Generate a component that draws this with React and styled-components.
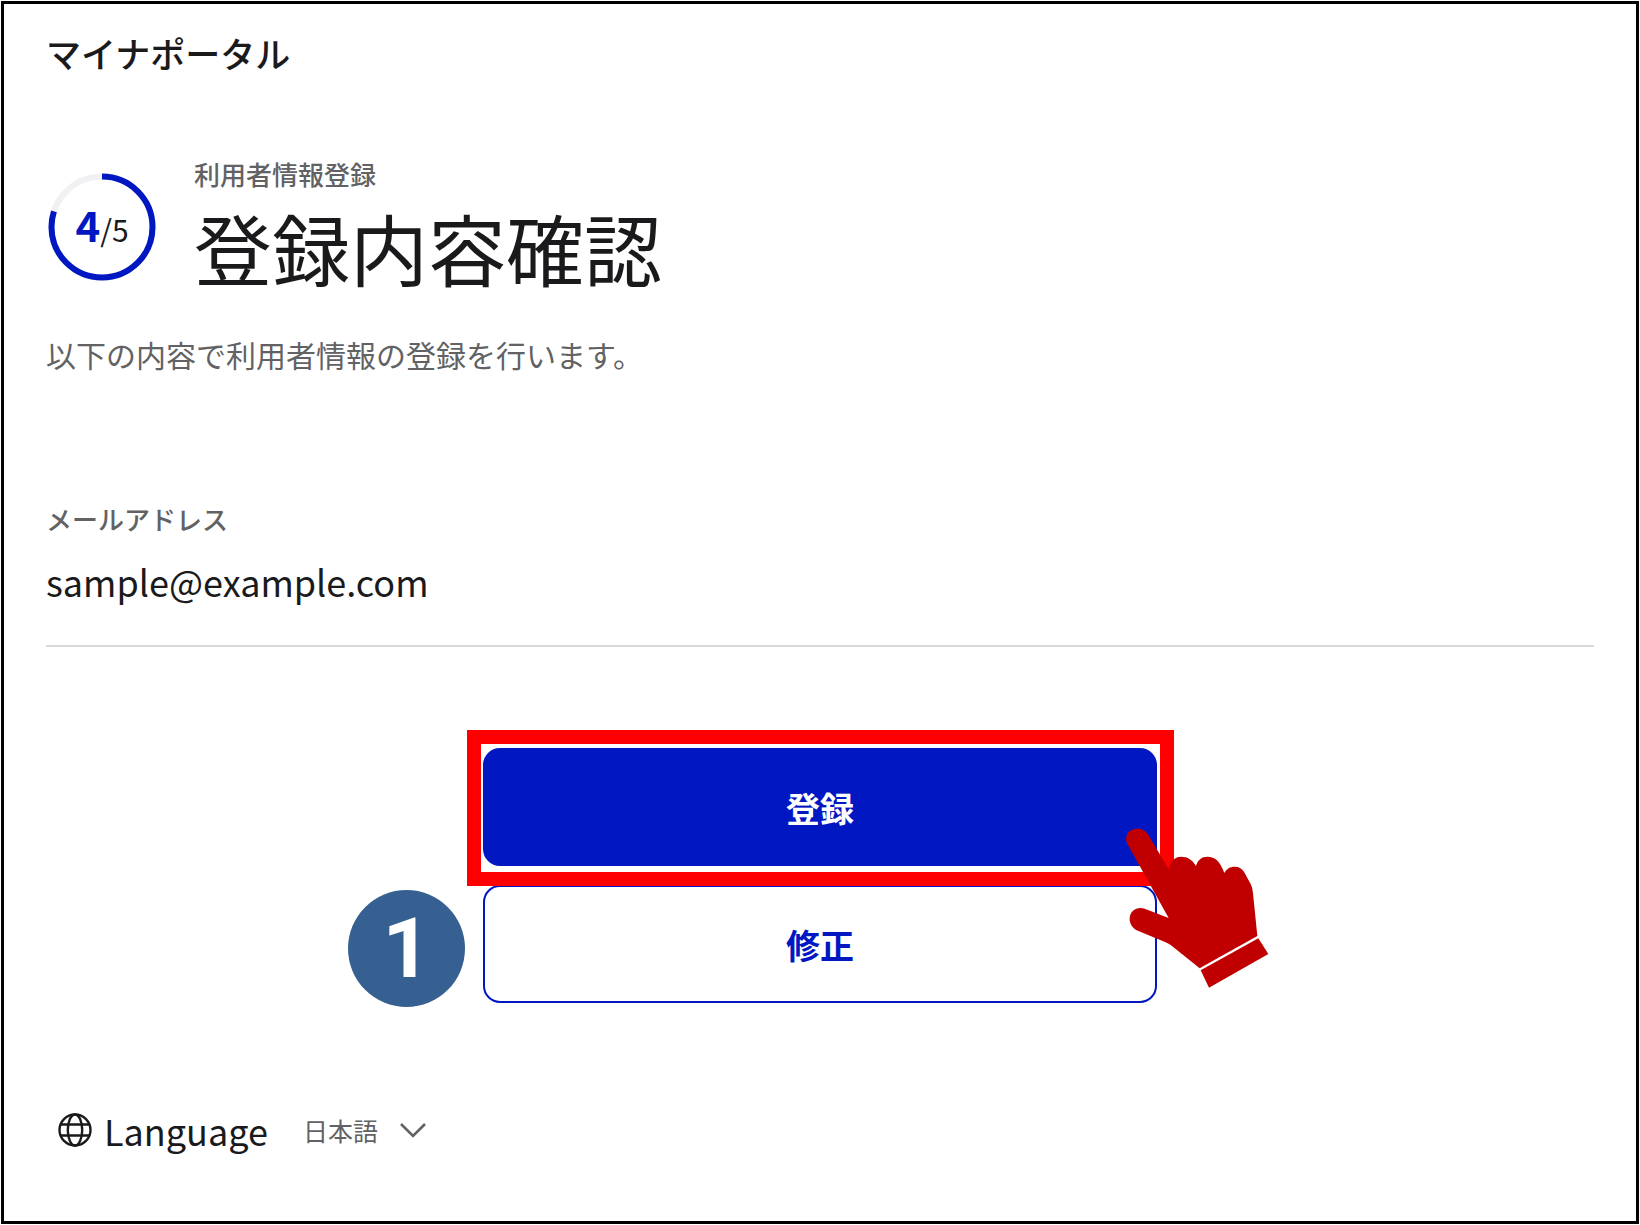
import React from 'react';
import styled, { createGlobalStyle } from 'styled-components';

const blue = '#0017c1';
const ink = '#1a1a1c';
const gray = '#626264';
const font = '"Noto Sans CJK JP", "Noto Sans", sans-serif';

const App = () => {
  return (
    <>
      <GlobalStyle />
      <Page>
        <Logo>マイナポータル</Logo>

        <main>
          <Heading>
            <Step>
              <svg viewBox="0 0 108 108" aria-hidden="true">
                <circle cx="54" cy="54" r="50.5" stroke="#f1f1f4" />
                <circle
                  cx="54"
                  cy="54"
                  r="50.5"
                  stroke={blue}
                  pathLength="100"
                  strokeDasharray="80 20"
                  transform="rotate(-90 54 54)"
                />
              </svg>
              <StepText><b>4</b>/5</StepText>
            </Step>
            <Titles>
              <Category>利用者情報登録</Category>
              <Title>登録内容確認</Title>
            </Titles>
          </Heading>

          <Description>以下の内容で利用者情報の登録を行います。</Description>

          <Details>
            <dt>メールアドレス</dt>
            <dd>sample@example.com</dd>
          </Details>

          <Actions>
            <Highlighted>
              <ActionButton type="button" $primary>登録</ActionButton>
            </Highlighted>
            <ActionButton type="button">修正</ActionButton>
            <Badge>1</Badge>
            <Hand viewBox="75 321 435 486" aria-hidden="true">
              <path d="M113 326C128 326 138 333 144 343L206 448C210 424 225 410 243 410C263 410 278 420 288 438C293 420 305 410 322 410C346 410 360 424 373 459C380 446 390 440 404 440C417 440 425 445 431 454L452 492Q458 503 459 520L472 648L299 745L213 676Q205 670 195 666L110 631C96 622 89 611 89 597C89 577 103 564 122 564Q132 564 142 569L206 594L84 375C78 365 77 355 80 347C84 333 97 326 113 326Z" />
              <path d="M302 751L475 655L505 702L327 803Z" />
            </Hand>
          </Actions>
        </main>

        <Footer>
          <LanguageLabel htmlFor="language">
            <svg viewBox="0 0 34 34" aria-hidden="true">
              <circle cx="17" cy="17" r="15.5" />
              <ellipse cx="17" cy="17" rx="7.2" ry="15.5" />
              <path d="M2.5 11.5H31.5M2.5 22.5H31.5" />
            </svg>
            Language
          </LanguageLabel>
          <SelectBox>
            <select id="language" defaultValue="ja">
              <option value="ja">日本語</option>
            </select>
            <svg viewBox="0 0 28 16" aria-hidden="true">
              <path d="M2 2L14 14L26 2" />
            </svg>
          </SelectBox>
        </Footer>
      </Page>
    </>
  )
}

const GlobalStyle = createGlobalStyle`
  * {
    box-sizing: border-box;
  }

  body {
    margin: 0;
    background: #fff;
    color: ${ink};
    font-family: ${font};
  }
`;

const Page = styled.div`
  min-height: calc(100vh - 2px);
  margin: 1px;
  padding: 24px 42px 32px;
  border: 3px solid #000;
`;

const Logo = styled.header`
  margin-bottom: 78px;
  font-size: 35px;
  font-weight: 500;
  line-height: 50px;
`;

const Heading = styled.div`
  display: flex;
  align-items: center;
  gap: 38px;
  padding-left: 2px;
`;

const Step = styled.div`
  display: grid;
  flex: none;
  width: 108px;
  height: 108px;
  place-items: center;

  > * {
    grid-area: 1 / 1;
  }

  svg {
    width: 100%;
    fill: none;
    stroke-width: 6;
  }
`;

const StepText = styled.span`
  font-size: 30px;
  line-height: 56px;

  b {
    color: ${blue};
    font-size: 42px;
  }
`;

const Titles = styled.div`
  display: flex;
  flex-direction: column;
  gap: 5px;
`;

const Category = styled.p`
  margin: 0;
  color: ${gray};
  font-size: 26px;
  font-weight: 500;
  line-height: 36px;
`;

const Title = styled.h1`
  margin: 0;
  font-size: 78px;
  font-weight: 400;
  line-height: 100px;
`;

const Description = styled.p`
  margin: 33px 0 0;
  color: ${gray};
  font-size: 30px;
  line-height: 48px;
`;

const Details = styled.dl`
  margin: 121px 0 0;
  padding-bottom: 36px;
  border-bottom: 2px solid #d9d9db;

  dt {
    color: ${gray};
    font-size: 26px;
    font-weight: 500;
    line-height: 40px;
  }

  dd {
    margin: 14px 0 0;
    font-size: 36px;
    line-height: 56px;
  }
`;

const Actions = styled.div`
  position: relative;
  display: flex;
  flex-direction: column;
  gap: 19px;
  max-width: 674px;
  margin: 101px auto 0;
`;

const Highlighted = styled.div`
  position: relative;
  display: flex;

  &::after {
    content: '';
    position: absolute;
    inset: -18px -17px -20px -16px;
    border: 14px solid #f00;
    pointer-events: none;
    z-index: 1;
  }
`;

const ActionButton = styled.button`
  width: 100%;
  height: 118px;
  border: 2px solid ${blue};
  border-radius: 17px;
  background: ${({ $primary }) => ($primary ? blue : '#fff')};
  color: ${({ $primary }) => ($primary ? '#fff' : blue)};
  font-family: inherit;
  font-size: 34px;
  font-weight: 700;
  cursor: pointer;
`;

const Badge = styled.span`
  position: absolute;
  left: -135px;
  bottom: -4px;
  display: grid;
  width: 117px;
  height: 117px;
  place-items: center;
  border-radius: 50%;
  background: #376092;
  color: #fff;
  font-family: Roboto, Arial, sans-serif;
  font-size: 84px;
  font-weight: 700;
  line-height: 96px;
`;

const Hand = styled.svg`
  position: absolute;
  top: 79px;
  right: -113px;
  width: 145px;
  height: 162px;
  fill: #c00000;
  pointer-events: none;
  z-index: 2;
`;

const Footer = styled.footer`
  display: flex;
  align-items: center;
  gap: 35px;
  margin-top: 103px;
  padding-left: 12px;
`;

const LanguageLabel = styled.label`
  display: flex;
  align-items: center;
  gap: 12px;
  font-size: 36px;
  line-height: 48px;

  svg {
    width: 34px;
    fill: none;
    stroke: ${ink};
    stroke-width: 2.4;
  }
`;

const SelectBox = styled.span`
  display: grid;
  align-items: center;

  > * {
    grid-area: 1 / 1;
  }

  select {
    padding: 0 48px 0 0;
    border: 0;
    appearance: none;
    background: none;
    color: ${gray};
    font-family: inherit;
    font-size: 25px;
    line-height: 48px;
  }

  svg {
    justify-self: end;
    width: 28px;
    fill: none;
    stroke: ${gray};
    stroke-width: 2.6;
    pointer-events: none;
  }
`;

export default App;
